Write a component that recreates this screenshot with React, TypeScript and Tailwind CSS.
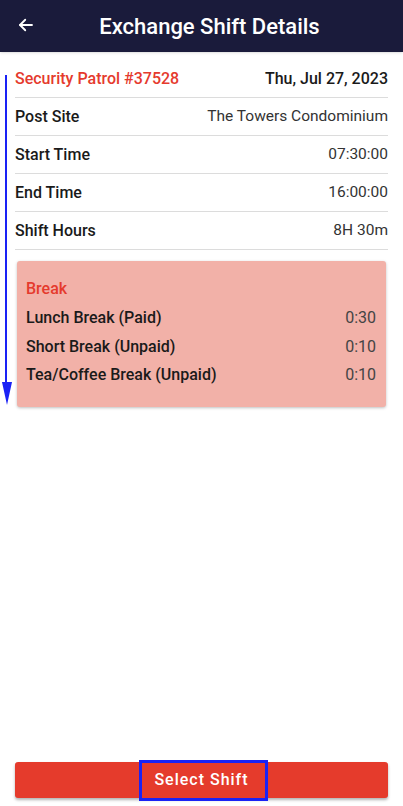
import React from "react";

interface Row {
  label: string;
  value: string;
}

const rows: Row[] = [
  { label: "Post Site", value: "The Towers Condominium" },
  { label: "Start Time", value: "07:30:00" },
  { label: "End Time", value: "16:00:00" },
  { label: "Shift Hours", value: "8H 30m" },
];

const breaks: Row[] = [
  { label: "Lunch Break (Paid)", value: "0:30" },
  { label: "Short Break (Unpaid)", value: "0:10" },
  { label: "Tea/Coffee Break (Unpaid)", value: "0:10" },
];

const App: React.FC = () => {
  return (
    <div
      className="relative w-[403px] h-[806px] bg-white flex flex-col overflow-hidden"
      style={{ fontFamily: "Roboto, 'Noto Sans', sans-serif" }}
    >
      {/* Header */}
      <header className="h-[52px] bg-[#1a1b3b] flex items-center relative shrink-0 shadow-sm">
        <svg
          className="absolute left-[17px] top-[16px]"
          width="18"
          height="18"
          viewBox="0 0 24 24"
          fill="none"
          stroke="white"
          strokeWidth="2.4"
          strokeLinecap="round"
          strokeLinejoin="round"
        >
          <path d="M20 12H4" />
          <path d="M11 5l-7 7 7 7" />
        </svg>
        <h1 className="w-full text-center text-white text-[22px] font-medium pl-[16px]">
          Exchange Shift Details
        </h1>
      </header>

      {/* Details */}
      <main className="flex-1 px-[15px] pt-[8px]">
        <div className="flex items-center justify-between h-[38px] border-b border-[#dcdcdc]">
          <span className="text-[#e53a2d] text-[16px] font-medium">Security Patrol #37528</span>
          <span className="text-[#1a1a1a] text-[16px] font-medium">Thu, Jul 27, 2023</span>
        </div>
        {rows.map((row, i) => (
          <div
            key={i}
            className="flex items-center justify-between h-[38px] border-b border-[#dcdcdc]"
          >
            <span className="text-[#1a1a1a] text-[16px] font-medium">{row.label}</span>
            <span className="text-[#333] text-[15.5px]">{row.value}</span>
          </div>
        ))}

        {/* Break card */}
        <div className="mt-[11px] mx-[2px] h-[146px] bg-[#f2b1a8] rounded-[3px] shadow-[0_1px_3px_rgba(0,0,0,0.25)] px-[9px] pt-[18px]">
          <div className="text-[#e53a2d] text-[16px] font-medium leading-[20px] mb-[5px]">Break</div>
          {breaks.map((b, i) => (
            <div key={i} className="flex items-center justify-between h-[28.5px]">
              <span className="text-[#1a1a1a] text-[16px] font-medium">{b.label}</span>
              <span className="text-[#444] text-[16px] pr-[1px]">{b.value}</span>
            </div>
          ))}
        </div>
      </main>

      {/* Bottom button */}
      <div className="px-[15px] pb-[8px] shrink-0">
        <button className="w-full h-[36px] bg-[#e53b2c] rounded-[3px] shadow-[0_2px_3px_rgba(0,0,0,0.3)] text-white text-[16px] font-medium tracking-[1px]">
          Select Shift
        </button>
      </div>

      {/* Annotation: arrow */}
      <div className="absolute left-[5px] top-[75px] w-[2px] h-[310px] bg-[#1a22f5]" />
      <svg className="absolute left-[2px] top-[382px]" width="10" height="23" viewBox="0 0 10 23">
        <polygon points="0,0 10,0 5,23" fill="#1a22f5" />
      </svg>

      {/* Annotation: box around button label */}
      <div className="absolute left-[139px] top-[760px] w-[129px] h-[41px] border-[3px] border-[#1a22f5]" />
    </div>
  );
};

export default App;
